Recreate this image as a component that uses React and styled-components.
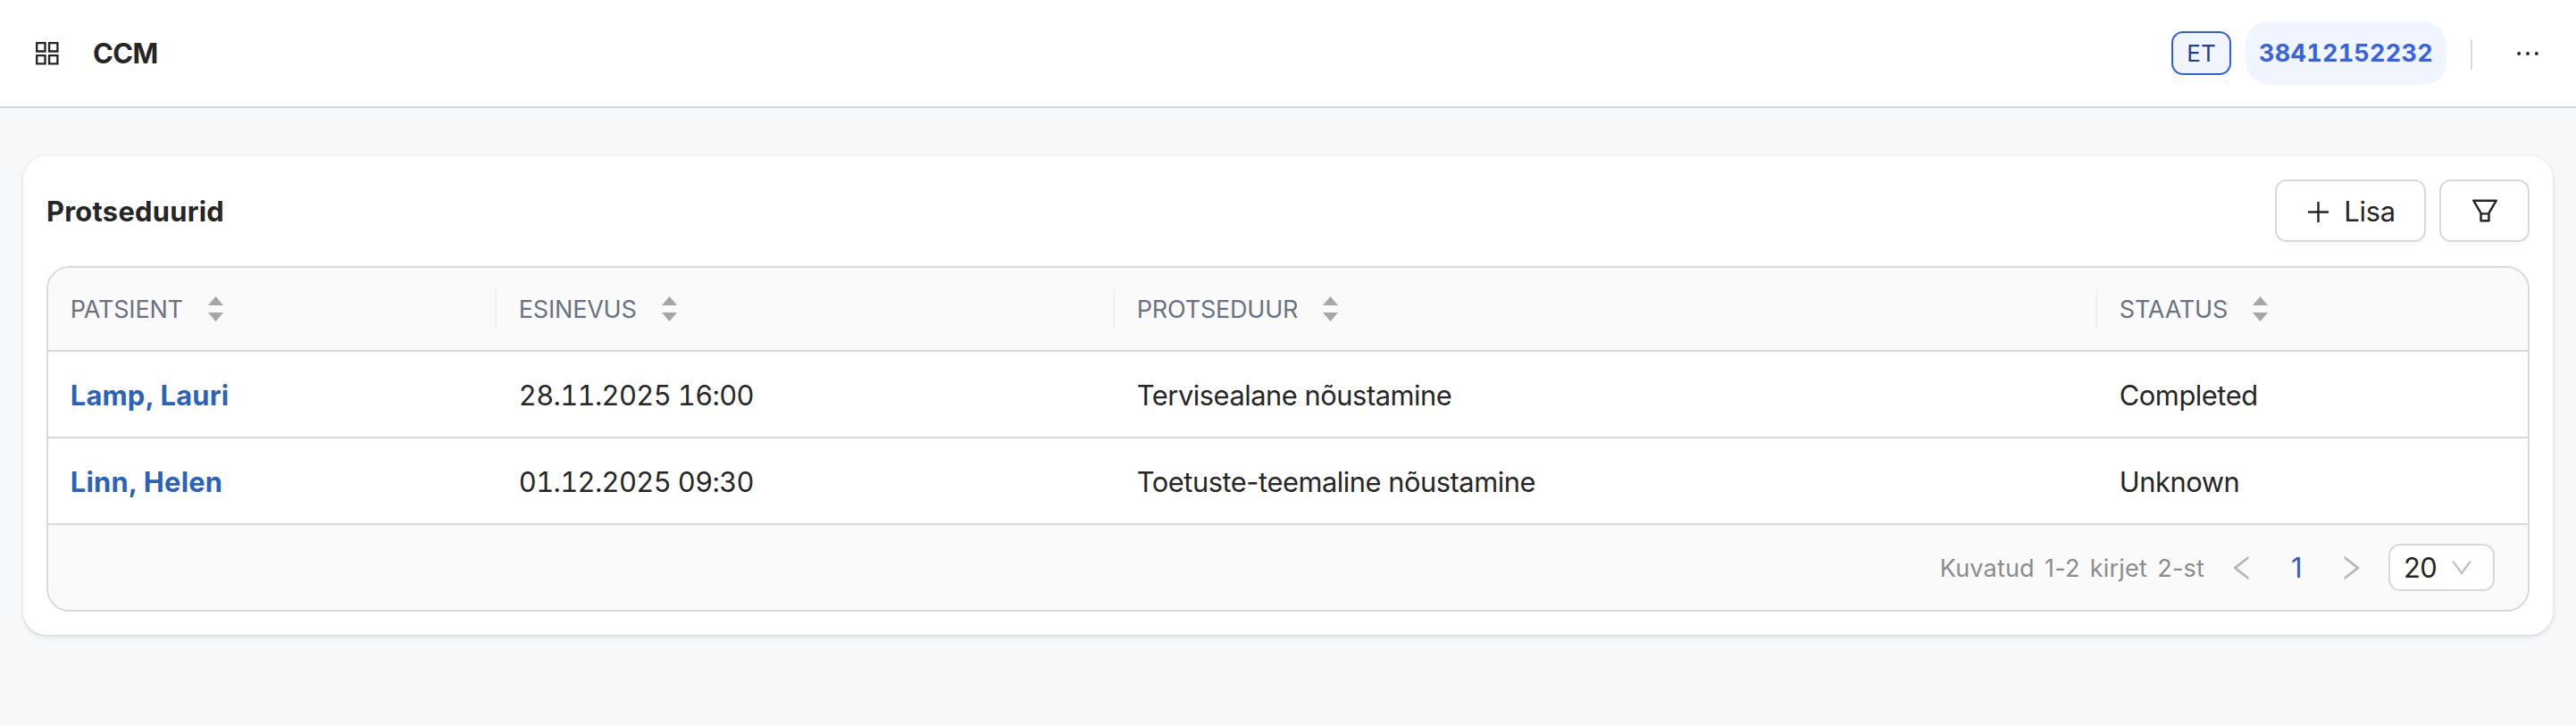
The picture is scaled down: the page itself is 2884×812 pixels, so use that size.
import React from "react";
import styled, { createGlobalStyle } from "styled-components";
import {
  AiOutlineAppstore,
  AiOutlineDown,
  AiOutlineEllipsis,
  AiOutlineFilter,
  AiOutlineLeft,
  AiOutlinePlus,
  AiOutlineRight
} from "react-icons/ai";

const GlobalStyle = createGlobalStyle`
  * {
    box-sizing: border-box;
  }
  body {
    margin: 0;
    background-color: #f6f8fa;
    color: #262626;
    font-family: Inter, sans-serif;
    font-size: 30.8px;
    letter-spacing: -0.45px;
    line-height: 49px;
  }
  svg {
    display: block;
    flex: none;
  }
`;

const Page = styled.div`
  min-height: 100vh;
`;

const Header = styled.header`
  display: flex;
  align-items: center;
  height: 121px;
  padding: 0 36px 0 35px;
  background-color: white;
  border-bottom: 2px solid #d9d9d9;
`;

const AppName = styled.div`
  margin-left: 33.5px;
  font-weight: 700;
  letter-spacing: -0.55px;
`;

const UserMenu = styled.div`
  display: flex;
  align-items: center;
  margin-left: auto;
`;

const Language = styled.div`
  width: 67px;
  height: 49px;
  border: 2px solid #2f5fe3;
  border-radius: 13px;
  background-color: #f0f5ff;
  color: #273f8a;
  font-size: 26px;
  letter-spacing: 0;
  line-height: 45px;
  text-align: center;
`;

const PersonCode = styled.div`
  width: 225px;
  height: 71px;
  margin-left: 16px;
  border-radius: 26px;
  background-color: #f0f5ff;
  color: #3662e3;
  font-size: 27px;
  font-weight: 700;
  font-variant-numeric: tabular-nums;
  letter-spacing: 0.25px;
  line-height: 71px;
  text-align: center;
`;

const Divider = styled.div`
  width: 2px;
  height: 34px;
  margin: 3px 44px 0 27px;
  background-color: #d9d9d9;
`;

const Card = styled.section`
  margin: 54px 26px 0;
  padding: 26px;
  border-radius: 26px;
  background-color: white;
  box-shadow: 0 2px 6px rgba(0, 0, 0, 0.1), 0 2px 4px -2px rgba(0, 0, 0, 0.1);
`;

const CardHeader = styled.div`
  display: flex;
  align-items: center;
  gap: 15px;
  height: 70px;
  margin-bottom: 27px;
`;

const Title = styled.div`
  margin-right: auto;
  padding-top: 1px;
  font-weight: 700;
  letter-spacing: 0.29px;
`;

const Button = styled.button`
  display: flex;
  align-items: center;
  justify-content: center;
  width: ${props => props.$width}px;
  height: 70px;
  padding: 0;
  border: 2px solid #d9d9d9;
  border-radius: 13px;
  background-color: white;
  color: inherit;
  font: inherit;
  letter-spacing: -0.2px;
  box-shadow: 0 4px 0 rgba(0, 0, 0, 0.02);
`;

const AddIcon = styled(AiOutlinePlus)`
  margin: 3px 12px 0 0;
`;

const ButtonLabel = styled.span`
  padding: 1px 2px 0 0;
`;

const TableBox = styled.div`
  overflow: hidden;
  border: 2px solid #d9d9d9;
  border-radius: 26px;
`;

const Row = styled.div`
  display: grid;
  grid-template-columns: 502px 692px 1100px 1fr;
  align-items: center;
  height: 97px;
  border-bottom: 2px solid #d9d9d9;
`;

const HeadRow = styled(Row)`
  height: 94px;
  background-color: #fafafa;
`;

const HeadCell = styled.div`
  display: flex;
  align-items: center;
  height: 45px;
  padding-left: 24.8px;
  border-right: 2px solid #f0f0f0;
  color: #6b7280;
  font-size: 27px;
  letter-spacing: -0.2px;
  &:last-child {
    border-right: 0;
  }
`;

const HeadLabel = styled.span`
  padding-top: 1px;
`;

const Sorter = styled.svg`
  width: 17px;
  height: 28px;
  margin-left: 28px;
  fill: #a6a6a6;
`;

const Cell = styled.div`
  padding: 1px 0 0 24.8px;
`;

const DateCell = styled(Cell)`
  font-variant-numeric: tabular-nums;
  letter-spacing: -0.6px;
`;

const PatientLink = styled.a`
  color: #2b62bb;
  font-weight: 700;
  letter-spacing: 0.22px;
`;

const Footer = styled.div`
  display: flex;
  align-items: center;
  height: 95px;
  padding-right: 37px;
  background-color: #fafafa;
`;

const Total = styled.div`
  margin: 0 24px 0 auto;
  padding-top: 1px;
  color: #8c8c8c;
  font-size: 27px;
  letter-spacing: 0.2px;
  word-spacing: 3.4px;
`;

const PageArrow = styled.div`
  color: #b8b8b8;
`;

const CurrentPage = styled.div`
  width: 86px;
  color: #2b62bb;
  text-align: center;
`;

const PageSize = styled.div`
  display: flex;
  align-items: center;
  justify-content: space-between;
  width: 119px;
  height: 53px;
  margin-left: 24px;
  padding: 0 20px 0 15px;
  border: 2px solid #d9d9d9;
  border-radius: 13px;
  background-color: white;
  svg {
    color: #bfbfbf;
  }
`;

const columns = ["PATSIENT", "ESINEVUS", "PROTSEDUUR", "STAATUS"];

const procedures = [
  {
    id: 1,
    patient: "Lamp, Lauri",
    date: "28.11.2025 16:00",
    name: "Tervisealane nõustamine",
    status: "Completed"
  },
  {
    id: 2,
    patient: "Linn, Helen",
    date: "01.12.2025 09:30",
    name: "Toetuste-teemaline nõustamine",
    status: "Unknown"
  }
];

const Procedure = ({ procedure }) => {
  const { patient, date, name, status } = procedure;

  return (
    <Row>
      <Cell>
        <PatientLink>{patient}</PatientLink>
      </Cell>
      <DateCell>{date}</DateCell>
      <Cell>{name}</Cell>
      <Cell>{status}</Cell>
    </Row>
  );
};

const App = () => (
  <Page>
    <GlobalStyle />
    <Header>
      <AiOutlineAppstore size={35.6} />
      <AppName>CCM</AppName>
      <UserMenu>
        <Language>ET</Language>
        <PersonCode>38412152232</PersonCode>
        <Divider />
        <AiOutlineEllipsis size={36} />
      </UserMenu>
    </Header>
    <Card>
      <CardHeader>
        <Title>Protseduurid</Title>
        <Button $width={169}>
          <AddIcon size={33} />
          <ButtonLabel>Lisa</ButtonLabel>
        </Button>
        <Button $width={101}>
          <AiOutlineFilter size={36} />
        </Button>
      </CardHeader>
      <TableBox>
        <HeadRow>
          {columns.map(column => (
            <HeadCell key={column}>
              <HeadLabel>{column}</HeadLabel>
              <Sorter viewBox="0 0 17 28">
                <path d="M8.5 0L17 10H0zM0 18h17l-8.5 10z" />
              </Sorter>
            </HeadCell>
          ))}
        </HeadRow>
        {procedures.map(procedure => (
          <Procedure key={procedure.id} procedure={procedure} />
        ))}
        <Footer>
          <Total>Kuvatud 1-2 kirjet 2-st</Total>
          <PageArrow>
            <AiOutlineLeft size={36} />
          </PageArrow>
          <CurrentPage>1</CurrentPage>
          <PageArrow>
            <AiOutlineRight size={36} />
          </PageArrow>
          <PageSize>
            20
            <AiOutlineDown size={30} />
          </PageSize>
        </Footer>
      </TableBox>
    </Card>
  </Page>
);

export default App;
